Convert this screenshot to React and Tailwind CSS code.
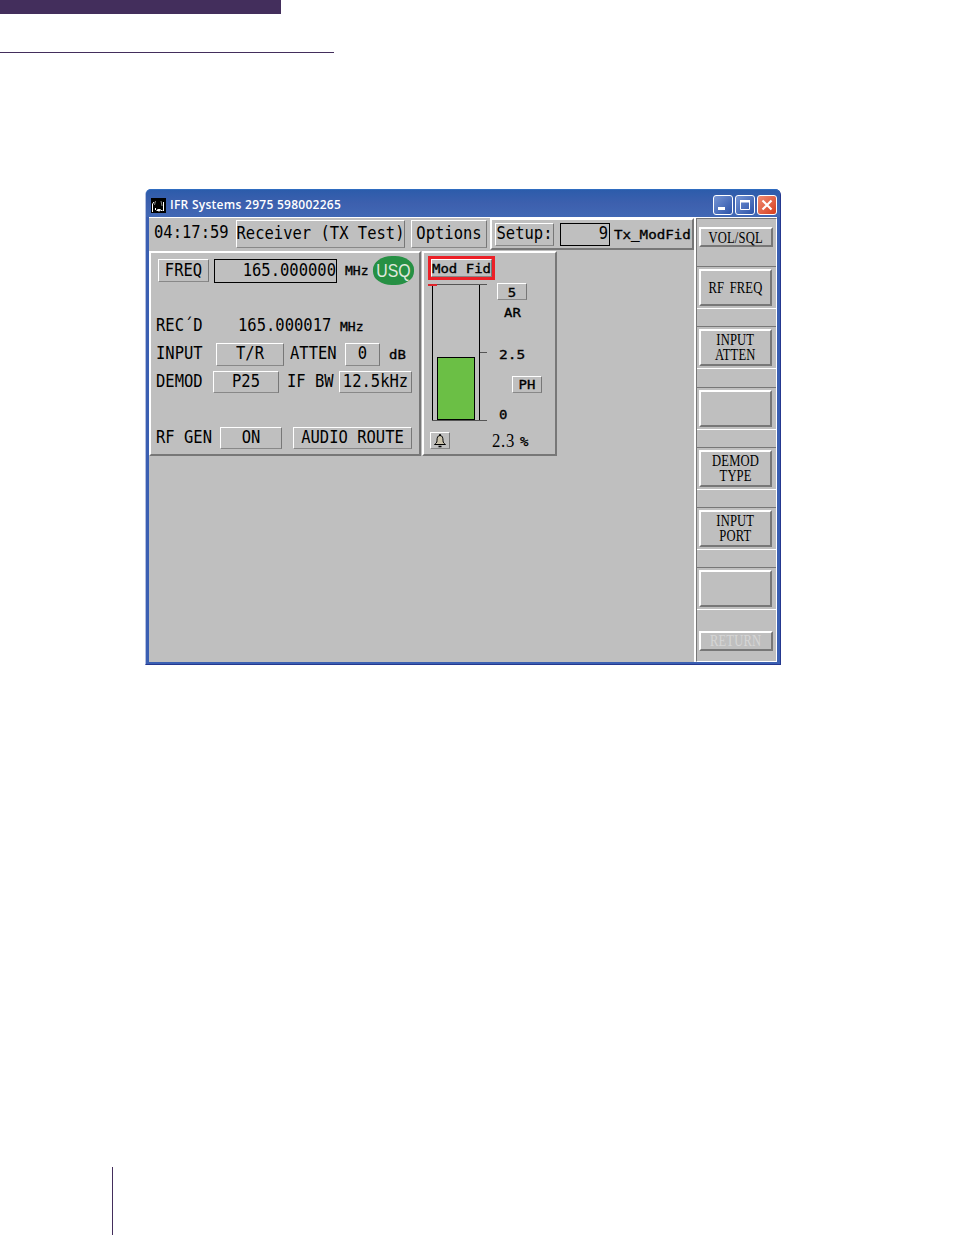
import { memo } from 'react';

const raised = 'border-2 border-t-white border-l-white border-r-[#777] border-b-[#777]';
const thin = 'border border-t-white border-l-white border-r-[#777] border-b-[#888]';

// terminal style text, narrow and tall
function Mono({ children, className = '' }) {
  return (
    <span
      className={`inline-block origin-center scale-y-[1.16] whitespace-pre font-['DejaVu_Sans_Mono',monospace] text-[15.5px] leading-none ${className}`}
    >
      {children}
    </span>
  );
}

// wide and low variant used for units and meter labels
function Small({ children, className = 'text-[14px]' }) {
  return (
    <span
      className={`inline-block origin-center scale-y-[0.9] whitespace-pre font-['DejaVu_Sans_Mono',monospace] leading-none [-webkit-text-stroke:0.35px_black] ${className}`}
    >
      {children}
    </span>
  );
}

function Btn({ children, className = '' }) {
  return (
    <button className={`flex shrink-0 items-center justify-center ${thin} ${className}`}>
      {children}
    </button>
  );
}

function KeyText({ children }) {
  return (
    <span className="block origin-center scale-x-[0.72] whitespace-pre text-center font-['Liberation_Serif',serif] text-[17.5px] leading-[15px] tracking-[0.2px] [word-spacing:3px]">
      {children}
    </span>
  );
}

function ShortKey({ children, className = '' }) {
  return (
    <button
      className={`ml-[2px] flex h-5 w-[74px] shrink-0 items-center justify-center ${raised} ${className}`}
    >
      <KeyText>{children}</KeyText>
    </button>
  );
}

function SoftKey({ label }) {
  return (
    <div className="mb-[17.3px] h-[43px] shrink-0 border-t border-b border-t-[#777] border-b-white pt-[2px] pl-[2px]">
      <button className={`flex h-[37px] w-[73px] items-center justify-center pb-px ${raised}`}>
        {label && <KeyText>{label}</KeyText>}
      </button>
    </div>
  );
}

function TitleBar() {
  return (
    <div className="flex h-7 shrink-0 items-center rounded-t-[5px] border-t border-t-[#2f6cc0] bg-linear-to-b from-[#2c5cab] via-[#3d60ae] to-[#4168b5] pt-[3px] pr-[3px] pl-[5px]">
      <svg width="15" height="15" viewBox="0 0 15 15">
        <path d="M0 0h15v15H0z" fill="#000" />
        <path d="M1.500 14V6L3 4M5.500 12.500h2M12.500 4v9M9.500 12.500h2" stroke="#fff" fill="none" />
        <path d="M4.500 3l-1 4M10 3l1 5" stroke="#888" fill="none" />
        <path d="M4 10h1v2H4zM6 11h4l-2 3z" fill="#fff" />
      </svg>
      <span className="ml-[4px] whitespace-nowrap font-['Open_Sans',sans-serif] text-[12px] font-semibold tracking-[0.27px] text-white">
        IFR Systems 2975 598002265
      </span>
      <div className="ml-auto flex gap-[2px]">
        <button className="flex h-5 w-5 items-center justify-center rounded-[3px] border border-white bg-linear-to-br from-[#7795d4] to-[#2c52a8]">
          <svg width="18" height="18" viewBox="0 0 18 18">
            <path d="M4 11h7v3H4z" fill="#fff" />
          </svg>
        </button>
        <button className="flex h-5 w-5 items-center justify-center rounded-[3px] border border-white bg-linear-to-br from-[#7795d4] to-[#2c52a8]">
          <svg width="18" height="18" viewBox="0 0 18 18">
            <path d="M4.500 5.500h9v8h-9z" fill="none" stroke="#fff" />
            <path d="M4 4h10v2.500H4z" fill="#fff" />
          </svg>
        </button>
        <button className="flex h-5 w-5 items-center justify-center rounded-[3px] border border-white bg-linear-to-br from-[#ef8a70] to-[#d63b19]">
          <svg width="18" height="18" viewBox="0 0 18 18">
            <path d="M4.500 4.500l9 9M13.500 4.500l-9 9" stroke="#fff" strokeWidth="2.200" />
          </svg>
        </button>
      </div>
    </div>
  );
}

function TopBar() {
  return (
    <div className="flex h-[32px] shrink-0 items-start">
      <Mono className="mt-[7px] ml-[5px] w-[82px]">04:17:59</Mono>
      <Btn className="mt-[2px] h-7 w-[169px] pb-px">
        <Mono>Receiver (TX Test)</Mono>
      </Btn>
      <Btn className="mt-[2px] ml-[6px] h-7 w-[76px] pb-px">
        <Mono>Options</Mono>
      </Btn>
      <div className={`ml-[3px] flex h-[32px] w-[204px] shrink-0 items-center pl-[3px] ${raised}`}>
        <Btn className="h-[23px] w-[59px] pb-px">
          <Mono>Setup:</Mono>
        </Btn>
        <div className="ml-[6px] flex h-[23px] w-[50px] shrink-0 items-center justify-end border border-black pr-px pb-px">
          <Mono>9</Mono>
        </div>
        <Small className="ml-[4px] text-[14.2px]">Tx_ModFid</Small>
      </div>
    </div>
  );
}

function ReceiverPanel() {
  return (
    <div className={`h-[205px] w-[272px] shrink-0 pl-[5px] ${raised}`}>
      <div className="flex h-[35px] items-center pl-[2px]">
        <Btn className="h-[23px] w-[51px]">
          <Mono>FREQ</Mono>
        </Btn>
        <div className="ml-[5px] flex h-6 w-[123px] shrink-0 items-center justify-end border border-black">
          <Mono>165.000000</Mono>
        </div>
        <Small className="ml-[8px] w-[28px] text-[13px]">MHz</Small>
        <div className="flex h-[29px] w-[41px] shrink-0 items-center justify-center rounded-[46%] bg-[#269044]">
          <span className="origin-center scale-x-[0.88] font-['Liberation_Sans',sans-serif] text-[18px] leading-none text-[#e0eadf]">
            USQ
          </span>
        </div>
      </div>
      <div className="mt-[26px] flex h-[24px] items-center">
        <Mono className="w-[82px]">REC´D</Mono>
        <Mono className="w-[102px]">165.000017</Mono>
        <Small className="text-[13px]">MHz</Small>
      </div>
      <div className="mt-[4px] flex h-[24px] items-center">
        <Mono className="w-[60px]">INPUT</Mono>
        <Btn className="h-[23px] w-[68px]">
          <Mono>T/R</Mono>
        </Btn>
        <Mono className="ml-[6px] w-[55px]">ATTEN</Mono>
        <Btn className="h-[23px] w-[35px]">
          <Mono>0</Mono>
        </Btn>
        <Small className="ml-[9px] text-[14px]">dB</Small>
      </div>
      <div className="mt-[4px] flex h-[24px] items-center">
        <Mono className="w-[57px]">DEMOD</Mono>
        <Btn className="h-[22px] w-[66px]">
          <Mono>P25</Mono>
        </Btn>
        <Mono className="ml-[8px] w-[52px]">IF BW</Mono>
        <Btn className="h-[22px] w-[73px]">
          <Mono>12.5kHz</Mono>
        </Btn>
      </div>
      <div className="mt-[32px] flex h-[24px] items-center">
        <Mono className="w-[64px]">RF GEN</Mono>
        <Btn className="h-[22px] w-[62px]">
          <Mono>ON</Mono>
        </Btn>
        <Btn className="ml-[11px] h-[22px] w-[119px]">
          <Mono>AUDIO ROUTE</Mono>
        </Btn>
      </div>
    </div>
  );
}

function Meter() {
  return (
    <svg width="60" height="138" viewBox="0 0 60 138" shapeRendering="crispEdges" className="shrink-0">
      <path d="M4 .500H59M51 68.500H59M4 136.500H59" stroke="#555" />
      <path d="M4.500 1V136M51.500 1V136" stroke="#000" />
      <path d="M0 1h9" stroke="#e0242b" strokeWidth="2" />
      <path d="M9.500 73.500h37v62h-37z" fill="#6bbf45" stroke="#000" />
    </svg>
  );
}

function ModFidPanel() {
  return (
    <div className={`h-[205px] w-[135px] shrink-0 pt-[3px] pl-[4px] ${raised}`}>
      <div className="h-[24px] w-[67px] bg-[#ec2027] p-[3px]">
        <Btn className="h-[18px] w-[61px] bg-[#bfbfbf]">
          <Small>Mod Fid</Small>
        </Btn>
      </div>
      <div className="mt-[4px] flex h-[138px]">
        <Meter />
        <div className="flex flex-col items-start pl-[9px]">
          <Btn className="-mt-px h-[17px] w-[30px]">
            <Small>5</Small>
          </Btn>
          <Small className="mt-[5px] ml-[7px] text-[14px]">AR</Small>
          <Small className="mt-[28px] ml-[2px] text-[14.5px]">2.5</Small>
          <Btn className="mt-[14px] ml-[15px] h-[17px] w-[30px]">
            <Small>PH</Small>
          </Btn>
          <Small className="mt-[14px] ml-[2px] text-[14px]">0</Small>
        </div>
      </div>
      <div className="mt-[9px] flex items-center pl-[2px]">
        <Btn className="h-[17px] w-[20px]">
          <svg width="14" height="14" viewBox="0 0 14 14">
            <path
              d="M7 1.500C4.500 1.500 4 4 4 6.500S3 9 1.500 10.500h11C11 9 10 9 10 6.500S9.500 1.500 7 1.500z"
              fill="#c9c1aa"
              stroke="#000"
            />
            <path d="M5.500 12.500h3M7 0v2" stroke="#000" strokeWidth="1.500" />
          </svg>
        </Btn>
        <span className="ml-[42px] inline-block w-[28px] origin-left scale-x-[0.88] font-['Liberation_Serif',serif] text-[19px] leading-none tracking-[0.8px]">
          2.3
        </span>
        <Small>%</Small>
      </div>
    </div>
  );
}

function SoftKeys() {
  return (
    <div className="flex w-[83px] shrink-0 flex-col border-l-2 border-l-white">
      <div className="flex grow flex-col border border-t-[#777] border-r-white border-b-white border-l-[#777]">
        <ShortKey className="mt-[8px] mb-[19px]">VOL/SQL</ShortKey>
        <SoftKey label="RF FREQ" />
        <SoftKey label={'INPUT\nATTEN'} />
        <SoftKey />
        <SoftKey label={'DEMOD\nTYPE'} />
        <SoftKey label={'INPUT\nPORT'} />
        <SoftKey />
        <ShortKey className="mt-[3px] text-[#d6d6d6]">RETURN</ShortKey>
      </div>
    </div>
  );
}

function App() {
  return (
    <div className="flex h-[1235px] w-[954px] flex-col overflow-hidden bg-white text-black">
      <div className="h-[14px] w-[281px] shrink-0 bg-[#432e5c]" />
      <div className="mt-[38px] h-px w-[334px] shrink-0 bg-[#432e5c]" />
      <div className="mt-[136px] ml-[145px] flex h-[476px] w-[636px] shrink-0 flex-col rounded-t-[6px] border-r border-b border-l border-r-[#25388f] border-b-[#25388f] border-l-[#b4bfe0] bg-[#3a5fb2]">
        <TitleBar />
        <div className="mr-[3px] mb-[2px] ml-[3px] flex grow border-t border-t-white bg-[#bfbfbf]">
          <div className="flex w-[545px] shrink-0 flex-col">
            <TopBar />
            <div className="mt-px flex gap-px">
              <ReceiverPanel />
              <ModFidPanel />
            </div>
          </div>
          <SoftKeys />
        </div>
      </div>
      <div className="mt-auto ml-[112px] h-[68px] w-px shrink-0 bg-[#432e5c]" />
    </div>
  );
}

export default memo(App);
